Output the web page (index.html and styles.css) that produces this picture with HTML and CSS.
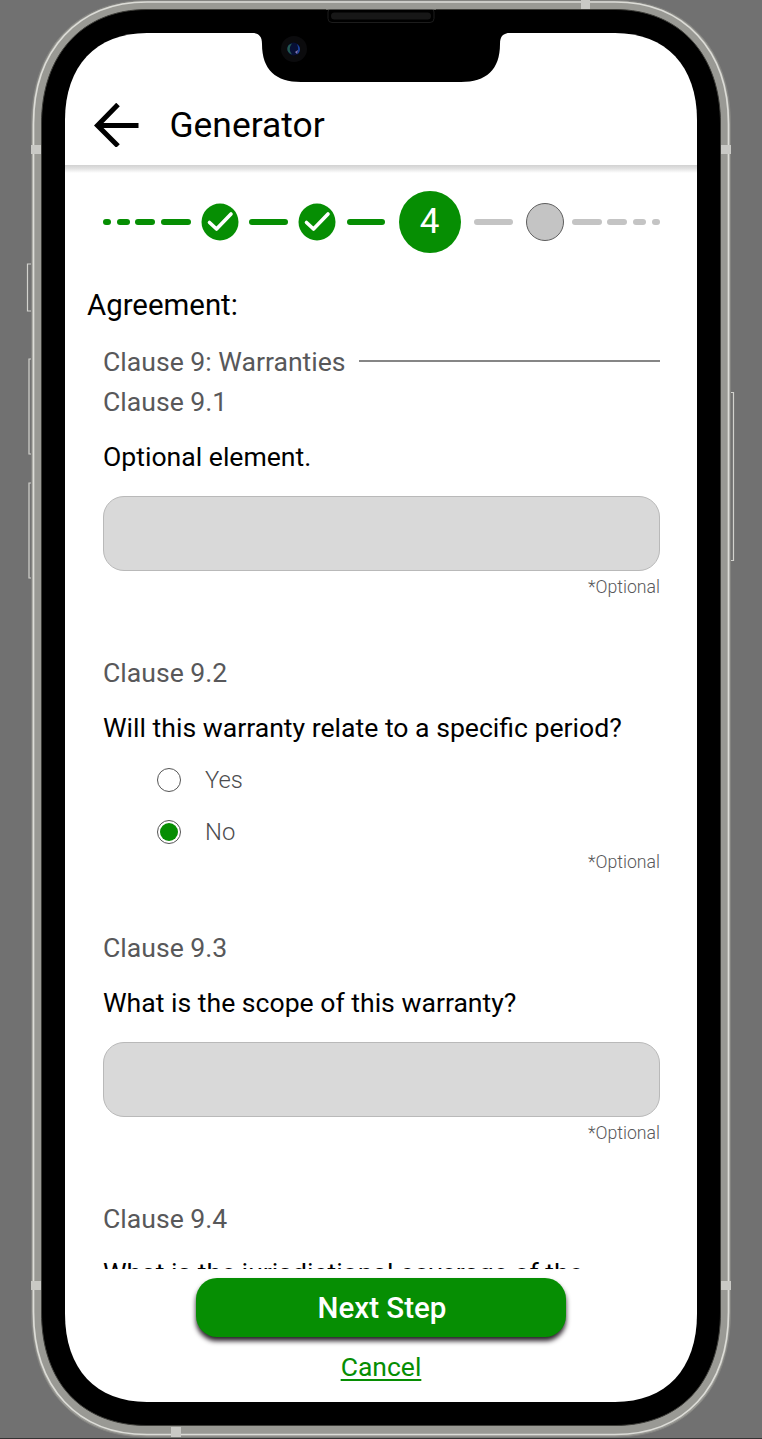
FILE: index.html
```html
<!DOCTYPE html>
<html lang="en">
<head>
<meta charset="utf-8">
<title>Generator</title>
<link rel="stylesheet" href="styles.css">
</head>
<body>
<div class="stage">
  <svg class="device" width="762" height="1439" viewBox="0 0 762 1439" aria-hidden="true">
    <g fill="none" stroke="#d2d2ce" stroke-width="1.2">
      <path d="M31 264h-3.500v47h3.500M31 359h-2v95h2M31 483h-2v95h2M731 392.500h2.500v168h-2.500"/>
    </g>
    <path fill="#999994" stroke="#838380" stroke-width="1" d="M147 .5H615C686 .5 730.500 49 730.500 124V1312C730.500 1390 686 1437 615 1437H147C76 1437 31.500 1390 31.500 1312V124C31.500 49 76 .5 147 .5Z"/>
    <path fill="none" stroke="#dcdcd7" stroke-width="1.700" d="M147 2H615C684 2 728.500 50 728.500 124V1312C728.500 1388 684 1434.500 615 1434.500H147C78 1434.500 33.500 1388 33.500 1312V124C33.500 50 78 2 147 2Z"/>
    <path fill="#c9c9c5" d="M31 145h10v9H31zM721 145h10v9H721zM31 1281h10v9H31zM721 1281h10v9H721zM581 0h9v10h-9zM171 1427h10v10H171z"/>
    <path fill="#000" stroke="#3c3c38" stroke-width="1" d="M147 9.500H615C680 9.500 720.500 55 720.500 124V1312C720.500 1383 680 1425.500 615 1425.500H147C82 1425.500 41.500 1383 41.500 1312V124C41.500 55 82 9.500 147 9.500Z"/>
    <path fill="#fff" d="M147 33H615C666 33 697 66 697 120V1314C697 1369 666 1402 615 1402H147C96 1402 65 1369 65 1314V120C65 66 96 33 147 33Z"/>
    <path fill="#000" d="M250 32.500C258 33 262 35 262 44C262 70 276 82 301 82H461C486 82 500 70 500 44C500 35 504 33 512 32.500Z"/>
    <rect x="328" y="8" width="106" height="14.500" rx="4" fill="#000" stroke="#1c1c1c"/>
    <path fill="#999994" d="M326 6h110v3.500H326z"/>
    <rect x="331" y="12.500" width="100" height="7" rx="3.500" fill="#171717"/>
    <circle cx="294" cy="49" r="13" fill="#0b0b0d"/>
    <circle cx="293.500" cy="49" r="6.500" fill="#071035"/>
    <path fill="#245a52" d="M292 43.500c-6 1-6.500 9 0 11c-3-4-3-7 0-11z"/>
    <path fill="#1d429c" d="M297 44c4 3 4 8 0 10.500c1.500-4 1.500-7 0-10.500z"/>
    <path fill="#8175b5" d="M295 52l3-2-1 4z"/>
    <path fill="#333" d="M0 1438h762v1H0z"/>
  </svg>

  <main class="screen">
    <header class="topbar">
      <svg class="back" width="46" height="44" viewBox="0 0 46 44"><path d="M24 1.500L3.500 22.500l20.500 20.500M3.500 22.500h41" fill="none" stroke="#000" stroke-width="5"/></svg>
      <h1 class="title">Generator</h1>
    </header>

    <div class="stepper">
      <div class="steps lead"><i class="dash w8"></i><i class="dash w13"></i><i class="dash w20"></i><i class="dash w30"></i></div>
      <svg class="done" width="38" height="38" viewBox="0 0 38 38"><circle cx="19" cy="19" r="18.500"/><path d="M8.500 19.500l7 6.500L30 11"/></svg>
      <i class="dash w38"></i>
      <svg class="done" width="38" height="38" viewBox="0 0 38 38"><circle cx="19" cy="19" r="18.500"/><path d="M8.500 19.500l7 6.500L30 11"/></svg>
      <i class="dash w38"></i>
      <span class="current">4</span>
      <i class="dash todo w38"></i>
      <span class="upcoming"></span>
      <div class="steps"><i class="dash todo w30"></i><i class="dash todo w20"></i><i class="dash todo w13"></i><i class="dash todo w8"></i></div>
    </div>

    <h2 class="heading">Agreement:</h2>

    <div class="form">
      <div class="group"><span>Clause 9: Warranties</span><span class="rule"></span></div>
      <section class="clause">
        <h3 class="name">Clause 9.1</h3>
        <p class="question">Optional element.</p>
        <div class="field"></div>
        <p class="note">*Optional</p>
      </section>
      <section class="clause">
        <h3 class="name">Clause 9.2</h3>
        <p class="question">Will this warranty relate to a specific period?</p>
        <div class="choices">
          <div class="choice"><span class="radio"></span><span class="label">Yes</span></div>
          <div class="choice"><span class="radio on"></span><span class="label">No</span></div>
        </div>
        <p class="note">*Optional</p>
      </section>
      <section class="clause">
        <h3 class="name">Clause 9.3</h3>
        <p class="question">What is the scope of this warranty?</p>
        <div class="field"></div>
        <p class="note">*Optional</p>
      </section>
      <section class="clause">
        <h3 class="name">Clause 9.4</h3>
        <p class="question last">What is the jurisdictional coverage of the</p>
      </section>
    </div>

    <footer class="actions">
      <div class="next">Next Step</div>
      <a class="cancel">Cancel</a>
    </footer>
  </main>
</div>
</body>
</html>
```
FILE: styles.css
```css
* { box-sizing: border-box; }
body { margin: 0; background: #717171; font-family: Roboto, "Liberation Sans", sans-serif; }
h1, h2, h3, p { margin: 0; font-weight: 400; white-space: nowrap; }
.stage { position: relative; width: 762px; height: 1439px; padding: 33px 65px 37px; overflow: hidden; }
.device { position: absolute; left: 0; top: 0; }
.screen { position: relative; height: 1369px; display: flex; flex-direction: column; }

.topbar { height: 132px; flex: none; display: flex; align-items: flex-end; padding: 0 0 18px 28.500px; gap: 30px; position: relative; }
.topbar::after { content: ""; position: absolute; left: 0; right: 0; top: 132px; height: 8px; background: linear-gradient(#d2d2d2, #e2e2e2 45%, #fff); }
.back { display: block; }
.title { font-size: 35.400px; line-height: 44px; }

.stepper { height: 62px; flex: none; margin: 26px 37px 0 38px; display: flex; align-items: center; }
.steps { display: flex; gap: 5.700px; }
.lead { margin-right: 9.500px; }
.dash { flex: none; height: 6px; border-radius: 3px; background: #068e03; }
.todo { background: #c4c4c4; }
.w8 { width: 8px; } .w13 { width: 13px; } .w20 { width: 20px; } .w30 { width: 30px; } .w38 { width: 38.500px; }
.done { flex: none; }
.done + .dash { margin: 0 10.750px 0 10.500px; }
.done circle { fill: #068e03; }
.done path { fill: none; stroke: #fff; stroke-width: 3.600; stroke-linecap: round; stroke-linejoin: round; }
.current { flex: none; width: 62px; height: 62px; border-radius: 50%; background: #068e03; color: #fff; font-size: 35px; line-height: 62px; text-align: center; margin: 0 13.500px 0 2.500px; }
.upcoming { flex: none; width: 38px; height: 38px; border-radius: 50%; background: #c4c4c4; border: 1px solid #5e5e5e; margin: 0 7.500px 0 13.500px; }

.heading { font-size: 29.400px; line-height: 40px; margin: 32px 0 0 22px; }
.form { height: 927px; flex: none; margin-top: 17px; padding: 0 37px 0 38px; overflow: hidden; }
.group { display: flex; align-items: center; gap: 13px; height: 40px; font-size: 26.600px; line-height: 39px; color: #58585a; white-space: nowrap; }
.group > span:first-child { margin-top: -1px; }
.rule { flex: 1; height: 1.500px; background: #868686; margin-top: -2px; }
.clause { margin-bottom: 56px; }
.name { font-size: 26.600px; line-height: 40px; color: #58585a; }
.question { font-size: 26.600px; line-height: 30px; margin-top: 20px; color: #000; }
.last { margin-top: 19px; }
.field { height: 75px; margin-top: 24px; background: #d9d9d9; border: 1px solid #b9b9b9; border-radius: 21px; }
.note { font-size: 17.700px; line-height: 20px; margin-top: 6px; font-weight: 300; text-align: right; color: #58585a; }
.choices { margin-top: 11px; padding-left: 54px; }
.choice { height: 52px; display: flex; align-items: center; gap: 24px; font-size: 23.800px; font-weight: 300; color: #4c4c4e; }
.radio { width: 24px; height: 24px; border: 1.500px solid #555; border-radius: 50%; padding: 2px; }
.on::before { content: ""; display: block; width: 18px; height: 18px; border-radius: 50%; background: #068e03; }
.choices + .note { margin-top: -6px; }

.actions { display: flex; flex-direction: column; align-items: center; padding-top: 9px; }
.next { width: 370px; height: 59px; border-radius: 21px; background: #068e03; color: #fff; font-size: 29.500px; font-weight: 500; line-height: 60px; text-align: center; padding-left: 2px; box-shadow: 0 4px 5px #2a222a; }
.cancel { margin-top: 10px; font-size: 26.500px; line-height: 40px; color: #068e03; text-decoration: underline; text-decoration-thickness: 1.500px; text-underline-offset: 3px; }
```
